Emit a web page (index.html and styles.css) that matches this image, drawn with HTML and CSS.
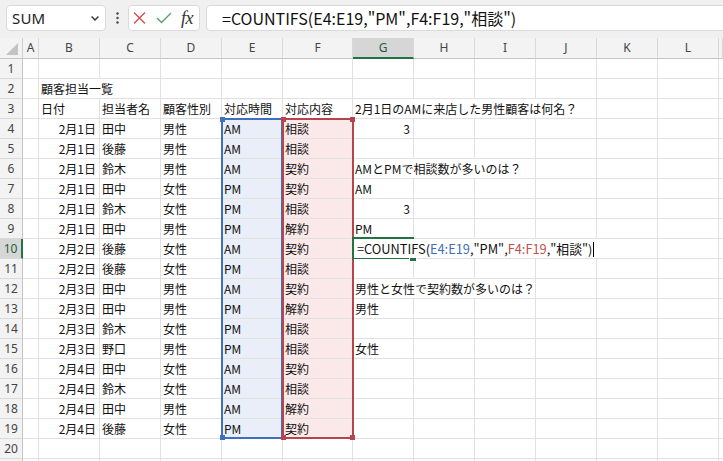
FILE: index.html
```html
<!DOCTYPE html>
<html lang="ja">
<head>
<meta charset="utf-8">
<title>COUNTIFS</title>
<link rel="stylesheet" href="styles.css">
</head>
<body>
<div class="toolbar">
  <div class="namebox"><span class="nm">SUM</span><svg class="chev" width="8" height="5" viewBox="0 0 8 5"><path d="M0.6 0.6 L4 4 L7.4 0.6" fill="none" stroke="#333" stroke-width="1.4"/></svg></div>
  <div class="more"><svg width="3" height="12" viewBox="0 0 3 12"><circle cx="1.5" cy="1.5" r="1.2" fill="#444"/><circle cx="1.5" cy="6" r="1.2" fill="#444"/><circle cx="1.5" cy="10.5" r="1.2" fill="#444"/></svg></div>
  <div class="fbtns">
    <svg class="ix" width="13" height="12" viewBox="0 0 13 12"><path d="M1 0.5 L12 11.5 M12 0.5 L1 11.5" fill="none" stroke="#d45050" stroke-width="1.4"/></svg>
    <svg class="ick" width="16" height="12" viewBox="0 0 16 12"><path d="M1 6 L5.5 10.5 L15 1" fill="none" stroke="#55a463" stroke-width="1.4"/></svg>
    <span class="fx">fx</span>
  </div>
  <div class="fbox">=COUNTIFS(E4:E19,"PM",F4:F19,"相談")</div>
</div>

<div class="sheet">
  <div class="row hdr">
    <div class="corner"></div>
    <div class="ch">A</div><div class="ch">B</div><div class="ch">C</div><div class="ch">D</div><div class="ch">E</div><div class="ch">F</div><div class="ch sel">G</div><div class="ch">H</div><div class="ch">I</div><div class="ch">J</div><div class="ch">K</div><div class="ch">L</div><div class="ch"></div>
  </div>

  <div class="row"><div class="rh">1</div><div class="c"></div><div class="c"></div><div class="c"></div><div class="c"></div><div class="c"></div><div class="c"></div><div class="c"></div><div class="c"></div><div class="c"></div><div class="c"></div><div class="c"></div><div class="c"></div><div class="c"></div></div>

  <div class="row"><div class="rh">2</div><div class="c"></div><div class="c s2">顧客担当一覧</div><div class="c"></div><div class="c"></div><div class="c"></div><div class="c"></div><div class="c"></div><div class="c"></div><div class="c"></div><div class="c"></div><div class="c"></div><div class="c"></div></div>

  <div class="row"><div class="rh">3</div><div class="c"></div><div class="c">日付</div><div class="c">担当者名</div><div class="c">顧客性別</div><div class="c">対応時間</div><div class="c">対応内容</div><div class="c s4">2月1日のAMに来店した男性顧客は何名？</div><div class="c"></div><div class="c"></div><div class="c"></div></div>

  <div class="row"><div class="rh">4</div><div class="c"></div><div class="c r">2月1日</div><div class="c">田中</div><div class="c">男性</div><div class="c fb">AM<div class="rng blue"><i class="h tl"></i><i class="h bl"></i></div></div><div class="c fr">相談<div class="rng red"><i class="h tl"></i><i class="h tr"></i><i class="h bl"></i><i class="h br"></i></div></div><div class="c r">3</div><div class="c"></div><div class="c"></div><div class="c"></div><div class="c"></div><div class="c"></div><div class="c"></div></div>

  <div class="row"><div class="rh">5</div><div class="c"></div><div class="c r">2月1日</div><div class="c">後藤</div><div class="c">男性</div><div class="c fb">AM</div><div class="c fr">相談</div><div class="c"></div><div class="c"></div><div class="c"></div><div class="c"></div><div class="c"></div><div class="c"></div><div class="c"></div></div>

  <div class="row"><div class="rh">6</div><div class="c"></div><div class="c r">2月1日</div><div class="c">鈴木</div><div class="c">男性</div><div class="c fb">AM</div><div class="c fr">契約</div><div class="c s3">AMとPMで相談数が多いのは？</div><div class="c"></div><div class="c"></div><div class="c"></div><div class="c"></div></div>

  <div class="row"><div class="rh">7</div><div class="c"></div><div class="c r">2月1日</div><div class="c">田中</div><div class="c">女性</div><div class="c fb">PM</div><div class="c fr">契約</div><div class="c">AM</div><div class="c"></div><div class="c"></div><div class="c"></div><div class="c"></div><div class="c"></div><div class="c"></div></div>

  <div class="row"><div class="rh">8</div><div class="c"></div><div class="c r">2月1日</div><div class="c">鈴木</div><div class="c">女性</div><div class="c fb">PM</div><div class="c fr">相談</div><div class="c r">3</div><div class="c"></div><div class="c"></div><div class="c"></div><div class="c"></div><div class="c"></div><div class="c"></div></div>

  <div class="row"><div class="rh">9</div><div class="c"></div><div class="c r">2月1日</div><div class="c">田中</div><div class="c">男性</div><div class="c fb">PM</div><div class="c fr">解約</div><div class="c">PM</div><div class="c"></div><div class="c"></div><div class="c"></div><div class="c"></div><div class="c"></div><div class="c"></div></div>

  <div class="row"><div class="rh sel">10</div><div class="c"></div><div class="c r">2月2日</div><div class="c">後藤</div><div class="c">女性</div><div class="c fb">AM</div><div class="c fr">契約</div><div class="c s4 act"><div class="active"></div><span class="edit">=COUNTIFS(<span class="tb">E4:E19</span>,"PM",<span class="tr2">F4:F19</span>,"相談")<span class="caret"></span></span></div><div class="c"></div><div class="c"></div><div class="c"></div></div>

  <div class="row"><div class="rh">11</div><div class="c"></div><div class="c r">2月2日</div><div class="c">後藤</div><div class="c">女性</div><div class="c fb">PM</div><div class="c fr">相談</div><div class="c"></div><div class="c"></div><div class="c"></div><div class="c"></div><div class="c"></div><div class="c"></div><div class="c"></div></div>

  <div class="row"><div class="rh">12</div><div class="c"></div><div class="c r">2月3日</div><div class="c">田中</div><div class="c">男性</div><div class="c fb">AM</div><div class="c fr">契約</div><div class="c s3">男性と女性で契約数が多いのは？</div><div class="c"></div><div class="c"></div><div class="c"></div><div class="c"></div></div>

  <div class="row"><div class="rh">13</div><div class="c"></div><div class="c r">2月3日</div><div class="c">田中</div><div class="c">男性</div><div class="c fb">PM</div><div class="c fr">解約</div><div class="c">男性</div><div class="c"></div><div class="c"></div><div class="c"></div><div class="c"></div><div class="c"></div><div class="c"></div></div>

  <div class="row"><div class="rh">14</div><div class="c"></div><div class="c r">2月3日</div><div class="c">鈴木</div><div class="c">女性</div><div class="c fb">PM</div><div class="c fr">相談</div><div class="c"></div><div class="c"></div><div class="c"></div><div class="c"></div><div class="c"></div><div class="c"></div><div class="c"></div></div>

  <div class="row"><div class="rh">15</div><div class="c"></div><div class="c r">2月3日</div><div class="c">野口</div><div class="c">男性</div><div class="c fb">PM</div><div class="c fr">相談</div><div class="c">女性</div><div class="c"></div><div class="c"></div><div class="c"></div><div class="c"></div><div class="c"></div><div class="c"></div></div>

  <div class="row"><div class="rh">16</div><div class="c"></div><div class="c r">2月4日</div><div class="c">田中</div><div class="c">女性</div><div class="c fb">AM</div><div class="c fr">契約</div><div class="c"></div><div class="c"></div><div class="c"></div><div class="c"></div><div class="c"></div><div class="c"></div><div class="c"></div></div>

  <div class="row"><div class="rh">17</div><div class="c"></div><div class="c r">2月4日</div><div class="c">鈴木</div><div class="c">女性</div><div class="c fb">AM</div><div class="c fr">相談</div><div class="c"></div><div class="c"></div><div class="c"></div><div class="c"></div><div class="c"></div><div class="c"></div><div class="c"></div></div>

  <div class="row"><div class="rh">18</div><div class="c"></div><div class="c r">2月4日</div><div class="c">田中</div><div class="c">男性</div><div class="c fb">AM</div><div class="c fr">解約</div><div class="c"></div><div class="c"></div><div class="c"></div><div class="c"></div><div class="c"></div><div class="c"></div><div class="c"></div></div>

  <div class="row"><div class="rh">19</div><div class="c"></div><div class="c r">2月4日</div><div class="c">後藤</div><div class="c">女性</div><div class="c fb">PM</div><div class="c fr">契約</div><div class="c"></div><div class="c"></div><div class="c"></div><div class="c"></div><div class="c"></div><div class="c"></div><div class="c"></div></div>

  <div class="row"><div class="rh">20</div><div class="c"></div><div class="c"></div><div class="c"></div><div class="c"></div><div class="c"></div><div class="c"></div><div class="c"></div><div class="c"></div><div class="c"></div><div class="c"></div><div class="c"></div><div class="c"></div><div class="c"></div></div>

  <div class="row"><div class="rh"></div><div class="c"></div><div class="c"></div><div class="c"></div><div class="c"></div><div class="c"></div><div class="c"></div><div class="c"></div><div class="c"></div><div class="c"></div><div class="c"></div><div class="c"></div><div class="c"></div><div class="c"></div></div>
</div>
</body>
</html>
```

FILE: styles.css
```css
* { box-sizing: border-box; }
html, body { margin: 0; padding: 0; }
body {
  width: 723px;
  height: 461px;
  overflow: hidden;
  background: #fff;
  font-family: "Noto Sans CJK JP", "Noto Sans", sans-serif;
  color: #111;
}

/* ---------- formula bar ---------- */
.toolbar {
  height: 38px;
  background: #f0f0f0;
  display: flex;
  align-items: flex-start;
  padding: 5px 0 0 6px;
  overflow: hidden;
}
.namebox {
  width: 100px;
  height: 26px;
  background: #fff;
  border: 1px solid #dadada;
  border-radius: 4px;
  display: flex;
  align-items: center;
  justify-content: space-between;
  padding: 0 6px 0 5px;
}
.nm {
  font-family: "Noto Sans", sans-serif;
  font-size: 15px;
  color: #222;
  letter-spacing: 0.2px;
}
.chev { display: block; }
.more {
  width: 22px;
  height: 26px;
  display: flex;
  align-items: center;
  justify-content: center;
}
.more svg { display: block; }
.fbtns {
  width: 72px;
  height: 26px;
  background: #fff;
  border: 1px solid #dadada;
  border-radius: 4px;
  display: flex;
  align-items: center;
  padding-left: 4px;
}
.ix { display: block; }
.ick { display: block; margin-left: 10px; }
.fx {
  margin-left: 9px;
  font-family: "Liberation Serif", "DejaVu Serif", serif;
  font-style: italic;
  font-size: 18px;
  line-height: 20px;
  color: #333;
  letter-spacing: -0.5px;
}
.fbox {
  flex: 1;
  margin-left: 6px;
  margin-right: -20px;
  height: 26px;
  background: #fff;
  border: 1px solid #dadada;
  border-radius: 4px;
  padding-left: 15px;
  font-size: 16px;
  line-height: 24px;
  color: #111;
  white-space: nowrap;
}

/* ---------- sheet ---------- */
.row {
  display: grid;
  grid-template-columns: 23px 16px 61px 61px 61px 61px 70px 61px 61px 61px 61px 61px 61px 4px;
  height: 20px;
}
.row.hdr { height: 21px; }

.corner {
  background: #f3f3f3;
  border-right: 1px solid #cfcfcf;
  border-bottom: 1px solid #c4c4c4;
  position: relative;
}
.corner::after {
  content: "";
  position: absolute;
  left: 6px;
  top: 5px;
  width: 12px;
  height: 12px;
  background: #c3c3c3;
  clip-path: polygon(100% 0, 100% 100%, 0 100%);
}
.ch {
  background: #f3f3f3;
  border-right: 1px solid #d8d8d8;
  border-bottom: 1px solid #c4c4c4;
  text-align: center;
  font-family: "Noto Sans", sans-serif;
  font-size: 12px;
  line-height: 19px;
  color: #444;
}
.ch.sel {
  background: #d6d6d6;
  border-bottom: 2px solid #217346;
  color: #1f5f3a;
}
.rh {
  background: #f3f3f3;
  border-right: 1px solid #c4c4c4;
  border-bottom: 1px solid #dadada;
  text-align: center;
  font-family: "Noto Sans", sans-serif;
  font-size: 12px;
  line-height: 19px;
  color: #444;
}
.rh.sel {
  background: #d6d6d6;
  border-right: 2px solid #217346;
  color: #1f5f3a;
}
.c {
  position: relative;
  border-right: 1px solid #e1e1e1;
  border-bottom: 1px solid #e1e1e1;
  font-size: 12px;
  line-height: 19px;
  padding: 0 2px;
  white-space: nowrap;
}
.c.r { text-align: right; padding-right: 3px; }
.s2 { grid-column: span 2; }
.s3 { grid-column: span 3; }
.s4 { grid-column: span 4; }

/* range fills */
.fb { background: #e9eef8; }
.fr { background: #fbe9ea; }

/* range outlines (overlay) */
.rng {
  position: absolute;
  top: -1px;
  height: 321px;
  border: 2px solid;
  pointer-events: none;
}
.rng.blue {
  left: -1px;
  width: 62px;
  border-color: #3f6fbe;
  z-index: 2;
}
.rng.red {
  left: -1px;
  width: 72px;
  border-color: #b5444c;
  z-index: 3;
}
.h {
  position: absolute;
  width: 5px;
  height: 5px;
}
.blue .h { background: #3f6fbe; }
.red .h { background: #b5444c; }
.h.tl { left: -3px; top: -3px; }
.h.tr { right: -3px; top: -3px; }
.h.bl { left: -3px; bottom: -3px; }
.h.br { right: -3px; bottom: -3px; }

/* active cell G10 */
.act { padding: 0; }
.active {
  position: absolute;
  left: -1px;
  top: -2px;
  width: 62px;
  height: 22px;
  border: 2px solid #217346;
  z-index: 4;
}
.active::after {
  content: "";
  position: absolute;
  right: -5px;
  bottom: -5px;
  width: 6px;
  height: 6px;
  background: #217346;
  border: 1px solid #fff;
}
.edit {
  position: relative;
  z-index: 5;
  display: inline-block;
  margin-left: 1px;
  padding: 0 3px 0 3px;
  background: #fff;
  height: 19px;
  font-size: 12.8px;
  line-height: 19px;
  color: #111;
}
.tb { color: #3f6fbe; }
.tr2 { color: #c0504d; }
.caret {
  display: inline-block;
  width: 1px;
  height: 15px;
  background: #000;
  margin-left: 1px;
  vertical-align: -3px;
}
```
